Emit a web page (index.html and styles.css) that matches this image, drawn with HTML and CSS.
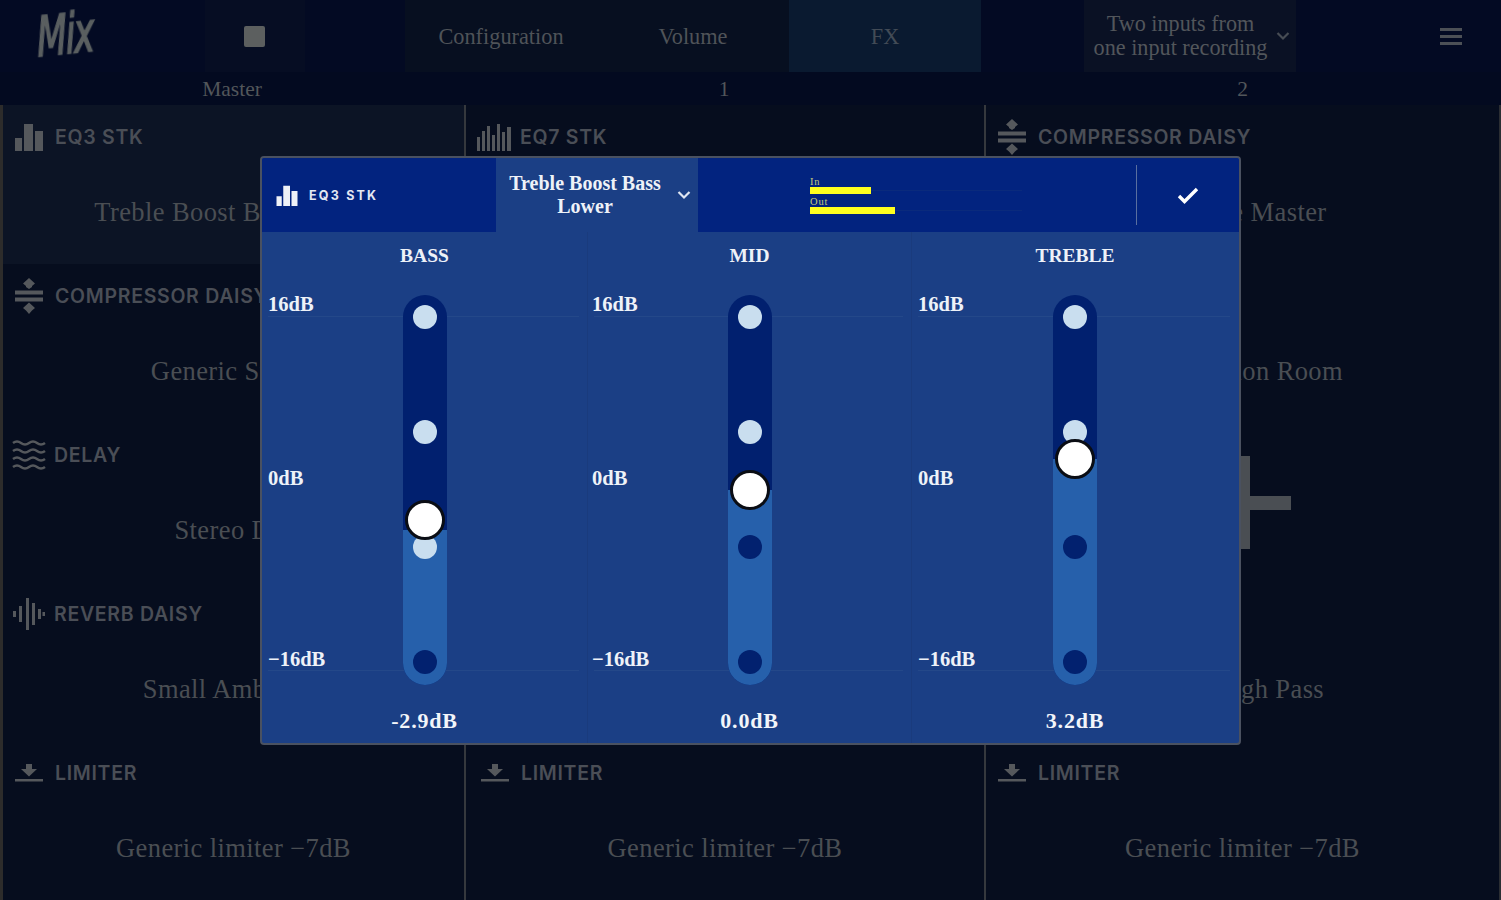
FILE: index.html
```html
<!DOCTYPE html>
<html lang="en">
<head>
<meta charset="utf-8">
<title>Mix</title>
<link rel="stylesheet" href="styles.css">
</head>
<body>
<svg class="defs" width="0" height="0" aria-hidden="true">
  <symbol id="i-eq3" viewBox="0 0 28 28"><path d="M0 15h7v13H0zM9 1h9v27H9zM20 8h8v20h-8z"/></symbol>
  <symbol id="i-eq7" viewBox="0 0 36 28"><path d="M0 14h3v14H0zM5 8h3v20H5zM10 3h3v25h-3zM15 12h3v16h-3zM20 1h3v27h-3zM25 9h3v19h-3zM30 4h4v24h-4z"/></symbol>
  <symbol id="i-comp" viewBox="0 0 28 38"><path d="M0 13.500h28v4H0zM0 20.500h28v4H0zM14 1l6 5.500-3 2.500 0 1-3 2-3-2 0-1-3-2.500zM14 25.500l6 5.500-3 2.500-3 3.500-3-3.500-3-2.500z"/></symbol>
  <symbol id="i-delay" viewBox="0 0 34 30"><path d="M1 3q4-3 8 0t8 0 8 0 8 0M1 11q4-3 8 0t8 0 8 0 8 0M1 19q4-3 8 0t8 0 8 0 8 0M1 27q4-3 8 0t8 0 8 0 8 0" fill="none" stroke="currentColor" stroke-width="2.600"/></symbol>
  <symbol id="i-rev" viewBox="0 0 32 32"><path d="M0 13h3v6H0zM6 8h3v16H6zM13 0h3v32h-3zM19 5h3v22h-3zM25 11h3v10h-3zM29.500 14h2.500v4h-2.500z"/></symbol>
  <symbol id="i-lim" viewBox="0 0 28 18"><path d="M11 0h6v5h5l-8 7.500L6 5h5zM0 15h28v2.500H0z"/></symbol>
  <symbol id="i-chev" viewBox="0 0 14 10"><path d="M1.500 2 7 7.500 12.500 2" fill="none" stroke="currentColor" stroke-width="2.200"/></symbol>
</svg>

<div class="app">
  <header class="topbar">
    <div class="logo"><span class="logo-text">Mix</span></div>
    <button class="stop"><span class="stop-glyph"></span></button>
    <nav class="tabs">
      <span class="tab">Configuration</span>
      <span class="tab">Volume</span>
      <span class="tab tab-on">FX</span>
    </nav>
    <div class="preset">
      <span class="preset-text">Two inputs from<br>one input recording</span>
      <svg class="preset-chev"><use href="#i-chev"/></svg>
    </div>
    <div class="menu"><span></span><span></span><span></span></div>
  </header>

  <div class="chan-labels">
    <span>Master</span><span>1</span><span>2</span>
  </div>

  <main class="columns">
    <section class="col">
      <article class="slot slot-on"><h3 class="slot-head"><svg class="ico ico-eq3"><use href="#i-eq3"/></svg>EQ3 STK</h3><p class="slot-body">Treble Boost Bass Lower</p></article>
      <article class="slot"><h3 class="slot-head"><svg class="ico ico-comp"><use href="#i-comp"/></svg>COMPRESSOR DAISY</h3><p class="slot-body">Generic Studio</p></article>
      <article class="slot"><h3 class="slot-head"><svg class="ico ico-delay"><use href="#i-delay"/></svg>DELAY</h3><p class="slot-body">Stereo Dly</p></article>
      <article class="slot"><h3 class="slot-head"><svg class="ico ico-rev"><use href="#i-rev"/></svg>REVERB DAISY</h3><p class="slot-body">Small Ambience</p></article>
      <article class="slot"><h3 class="slot-head"><svg class="ico ico-lim"><use href="#i-lim"/></svg>LIMITER</h3><p class="slot-body">Generic limiter −7dB</p></article>
    </section>
    <section class="col col-mid">
      <article class="slot"><h3 class="slot-head"><svg class="ico ico-eq7"><use href="#i-eq7"/></svg>EQ7 STK</h3></article>
      <article class="slot"></article>
      <article class="slot"></article>
      <article class="slot"></article>
      <article class="slot"><h3 class="slot-head"><svg class="ico ico-lim"><use href="#i-lim"/></svg>LIMITER</h3><p class="slot-body">Generic limiter −7dB</p></article>
    </section>
    <section class="col">
      <article class="slot"><h3 class="slot-head"><svg class="ico ico-comp"><use href="#i-comp"/></svg>COMPRESSOR DAISY</h3><p class="slot-body">Vintage Master</p></article>
      <article class="slot"><div class="slot-head"></div><p class="slot-body">Convention Room</p></article>
      <article class="slot slot-add"><span class="plus"></span></article>
      <article class="slot"><div class="slot-head"></div><p class="slot-body">Soft High Pass</p></article>
      <article class="slot"><h3 class="slot-head"><svg class="ico ico-lim"><use href="#i-lim"/></svg>LIMITER</h3><p class="slot-body">Generic limiter −7dB</p></article>
    </section>
  </main>

  <div class="dialog">
    <div class="dlg-head">
      <div class="dlg-name"><svg class="dlg-ico"><use href="#i-eq3"/></svg>EQ3 STK</div>
      <div class="dlg-preset"><span class="dlg-preset-text">Treble Boost Bass Lower</span><svg class="dlg-chev"><use href="#i-chev"/></svg></div>
      <div class="meters">
        <div class="meter"><span class="meter-label">In</span><div class="meter-track"><div class="meter-bar" style="width:61px"></div></div></div>
        <div class="meter"><span class="meter-label">Out</span><div class="meter-track"><div class="meter-bar" style="width:85px"></div></div></div>
      </div>
      <div class="dlg-ok">
        <svg class="check" viewBox="0 0 24 20"><path d="M3 11l5.500 5.500L21 4" fill="none" stroke="#fff" stroke-width="3.400"/></svg>
      </div>
    </div>
    <div class="bands">
      <div class="band">
        <div class="band-title">BASS</div>
        <div class="tick tick-hi">16dB</div><div class="tick tick-mid">0dB</div><div class="tick tick-lo">−16dB</div>
        <div class="rule rule-hi"></div><div class="rule rule-lo"></div>
        <div class="slider">
          <div class="fill" style="height:155px"></div>
          <i class="dot"></i><i class="dot"></i><i class="dot"></i><i class="dot dot-dark"></i>
          <b class="thumb" style="top:205px"></b>
        </div>
        <div class="band-value">-2.9dB</div>
      </div>
      <div class="band band-mid">
        <div class="band-title">MID</div>
        <div class="tick tick-hi">16dB</div><div class="tick tick-mid">0dB</div><div class="tick tick-lo">−16dB</div>
        <div class="rule rule-hi"></div><div class="rule rule-lo"></div>
        <div class="slider">
          <div class="fill" style="height:195px"></div>
          <i class="dot"></i><i class="dot"></i><i class="dot dot-dark"></i><i class="dot dot-dark"></i>
          <b class="thumb" style="top:175px"></b>
        </div>
        <div class="band-value">0.0dB</div>
      </div>
      <div class="band">
        <div class="band-title">TREBLE</div>
        <div class="tick tick-hi">16dB</div><div class="tick tick-mid">0dB</div><div class="tick tick-lo">−16dB</div>
        <div class="rule rule-hi"></div><div class="rule rule-lo"></div>
        <div class="slider">
          <div class="fill" style="height:226px"></div>
          <i class="dot"></i><i class="dot"></i><i class="dot dot-dark"></i><i class="dot dot-dark"></i>
          <b class="thumb" style="top:144px"></b>
        </div>
        <div class="band-value">3.2dB</div>
      </div>
    </div>
  </div>
</div>
</body>
</html>
```
FILE: styles.css
```css
* { box-sizing: border-box; }
html, body { margin: 0; padding: 0; background: #060d1e; }
body { width: 1501px; height: 900px; overflow: hidden; font-family: "Liberation Serif", serif; }
.defs { position: absolute; }

.app { position: relative; width: 1501px; height: 900px; background: #060d1e; color: #55595d; filter: blur(0.6px); }

/* top bar */
.topbar { display: flex; align-items: stretch; height: 72px; background: #030a23; }
.logo { width: 205px; display: flex; align-items: center; padding-left: 37px; }
.logo-text { display: block; font: italic 400 32px/40px "DejaVu Sans Condensed", "DejaVu Sans", sans-serif; color: #5a5f60; -webkit-text-stroke: 1px #5a5f60; letter-spacing: -1px; transform: translateY(1px) scale(1.2, 1.75) rotate(-4deg); transform-origin: left center; }
.stop { width: 100px; border: 0; padding: 0; background: #060d23; display: flex; align-items: center; justify-content: center; }
.stop-glyph { width: 21px; height: 21px; margin-left: -2px; background: #5c5f5f; border-radius: 2px; }
.tabs { display: flex; margin-left: 100px; background: #070f20; }
.tab { width: 192px; padding-top: 1px; display: flex; align-items: center; justify-content: center; font-size: 22.300px; color: #4f5358; }
.tab-on { background: #0a1a30; color: #424b56; }
.preset { width: 212px; margin-left: 103px; display: flex; align-items: center; justify-content: center; gap: 9px; background: #0a1124; padding-left: 4px; }
.preset-text { font-size: 22.200px; line-height: 24px; text-align: center; color: #52565b; white-space: nowrap; }
.preset-chev { width: 14px; height: 10px; color: #474c54; }
.menu { flex: 1; display: flex; flex-direction: column; justify-content: center; align-items: flex-end; gap: 4px; padding-right: 39px; }
.menu span { width: 22px; height: 3px; background: #4c5056; }

/* channel labels */
.chan-labels { display: grid; grid-template-columns: 464px 520px 517px; height: 33px; padding-top: 1px; background: #030a20; }
.chan-labels span { display: flex; align-items: center; justify-content: center; font-size: 21.500px; color: #52565a; }

/* columns */
.columns { display: grid; grid-template-columns: 464px 520px 517px; height: 795px; }
.col { display: flex; flex-direction: column; border-left: 2px solid #35383d; }
.col:last-child { border-right: 2px solid #2b2e33; }
.col:first-child { border-left: 3px solid #2d2c2b; }
.slot { height: 159px; }
.slot-on { background: #0c1425; }
.slot-head { margin: 0; height: 64px; display: flex; align-items: center; gap: 12px; padding-left: 12px; font: 600 19.500px "Inter", sans-serif; letter-spacing: 0.7px; color: #4a4e56; white-space: nowrap; }
.col-mid .slot-head { padding-left: 15px; }
.slot-body { margin: 0; height: 86px; display: flex; align-items: center; justify-content: center; font-size: 26.500px; letter-spacing: 0.4px; color: #4a4e53; white-space: nowrap; }
.ico { fill: #55585c; color: #55585c; flex: none; }
.ico-eq3 { width: 28px; height: 28px; }
.ico-eq7 { width: 36px; height: 28px; margin-left: -4px; margin-right: -5px; }
.ico-comp { width: 28px; height: 38px; }
.ico-delay { width: 34px; height: 30px; margin-left: -3px; margin-right: -4px; }
.ico-rev { width: 32px; height: 32px; margin-left: -2px; margin-right: -3px; }
.ico-lim { width: 28px; height: 18px; }

.slot-add { display: flex; align-items: center; justify-content: center; }
.plus { width: 96px; height: 93px; background: linear-gradient(#4a4e53, #4a4e53) center / 100% 14px no-repeat, linear-gradient(#4a4e53, #4a4e53) center / 14px 100% no-repeat; }

/* dialog */
.dialog { position: absolute; left: 260px; top: 156px; width: 981px; height: 589px; background: #1b3f85; border: 2px solid #4a5160; border-radius: 4px; display: flex; flex-direction: column; overflow: hidden; }
.dlg-head { display: flex; height: 74px; flex: none; background: #02237f; }
.dlg-name { width: 234px; display: flex; align-items: center; gap: 11px; padding-left: 14px; font: 700 12.500px "Inter", sans-serif; letter-spacing: 2.200px; color: #e4e8f2; }
.dlg-ico { width: 22px; height: 21px; fill: #eef1f7; }
.dlg-preset { width: 202px; background: #1b3f85; display: flex; align-items: center; gap: 10px; padding-left: 7px; color: #eef2f8; }
.dlg-preset-text { width: 164px; text-align: center; font-size: 20px; line-height: 23px; font-weight: 700; }
.dlg-chev { width: 14px; height: 10px; color: #dfe6f2; }
.meters { width: 438px; padding-left: 112px; display: flex; flex-direction: column; justify-content: center; gap: 2px; }
.meter { width: 212px; display: flex; flex-direction: column; }
.meter-label { font-size: 10.500px; line-height: 11px; letter-spacing: 0.8px; color: #c3c97c; }
.meter-track { height: 7px; background: linear-gradient(#0a2a7c, #0a2a7c) center / 100% 1px no-repeat; }
.meter-bar { height: 7px; background: #ffff1e; }
.dlg-ok { flex: 1; position: relative; display: flex; align-items: center; justify-content: center; }
.dlg-ok::before { content: ""; position: absolute; left: 0; top: 7px; bottom: 7px; width: 1px; background: #5a6f9f; }
.check { width: 24px; height: 20px; }

.bands { flex: 1; display: grid; grid-template-columns: 326px 324px 326px; }
.band { position: relative; display: flex; flex-direction: column; align-items: center; border-right: 1px solid #1a3b7d; }
.band:last-child { border-right: 0; }
.band-title { height: 46px; padding-top: 1px; display: flex; align-items: center; font-size: 19.500px; font-weight: 700; color: #eef2f8; }
.tick { position: absolute; left: 6px; font-size: 20.500px; font-weight: 700; line-height: 24px; color: #eef2f8; }
.band-mid .tick { left: 4px; }
.tick-hi { top: 60px; }
.tick-mid { top: 234px; }
.tick-lo { top: 415px; }
.rule { position: absolute; left: 6px; right: 8px; height: 1px; background: #244889; }
.rule-hi { top: 84px; }
.rule-lo { top: 438px; }
.slider { position: relative; width: 44px; height: 390px; margin-top: 17px; border-radius: 22px; background: #01206f; display: flex; flex-direction: column; align-items: center; justify-content: space-between; padding: 10px 0 11px; }
.fill { position: absolute; left: 0; right: 0; bottom: 0; background: #2660ab; border-radius: 0 0 22px 22px; }
.dot { position: relative; width: 24px; height: 24px; border-radius: 50%; background: #c9deef; }
.dot-dark { background: #02216f; }
.thumb { position: absolute; left: 2px; width: 40px; height: 40px; border-radius: 50%; background: #fff; border: 3px solid #0a0d14; }
.band-value { margin-top: 23px; font-size: 22px; letter-spacing: 0.8px; font-weight: 700; color: #f2f5fa; }
```
